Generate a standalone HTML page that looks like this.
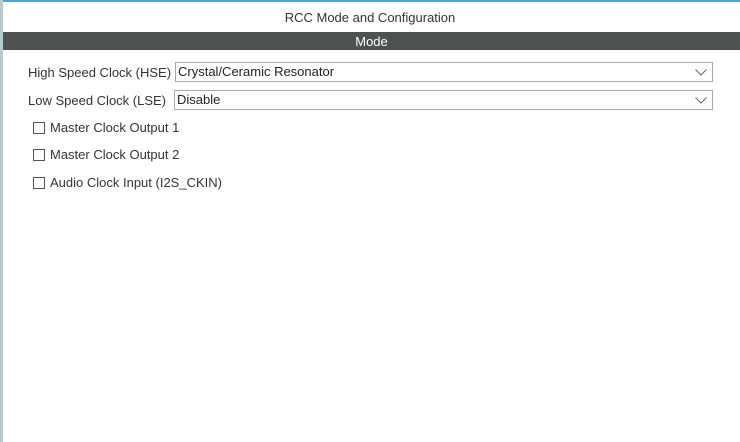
<!DOCTYPE html>
<html><head><style>
body{margin:0;width:740px;height:442px;background:#fff;position:relative;overflow:hidden;font-family:"Liberation Sans",sans-serif;font-size:13px;color:#333}
.abs{position:absolute}
.sel{position:absolute;border:1px solid #a8a8a8;height:20px;box-sizing:border-box;background:#fff;line-height:18px;padding-left:2px;color:#222}
.sel svg{position:absolute;right:5px;top:6px}
.cb{position:absolute;width:10px;height:10px;border:1px solid #555;background:#fff}
</style></head><body>
<div class="abs" style="left:0;top:0;width:740px;height:2px;background:#3fa9dc"></div>
<div class="abs" style="left:0;top:0;width:3px;height:442px;background:#b9cacb"></div>
<div class="abs" style="left:0;top:10px;width:740px;text-align:center;color:#333">RCC Mode and Configuration</div>
<div class="abs" style="left:3px;top:32px;width:737px;height:18px;background:#505251;color:#fff;text-align:center;line-height:19px">Mode</div>
<div class="abs" style="left:28px;top:65px">High Speed Clock (HSE)</div>
<div class="sel" style="left:175px;top:62px;width:538px">Crystal/Ceramic Resonator<svg width="12" height="7"><path d="M0.5 0.5L6 6L11.5 0.5" fill="none" stroke="#666"/></svg></div>
<div class="abs" style="left:28px;top:93px">Low Speed Clock (LSE)</div>
<div class="sel" style="left:174px;top:90px;width:539px">Disable<svg width="12" height="7"><path d="M0.5 0.5L6 6L11.5 0.5" fill="none" stroke="#666"/></svg></div>
<div class="cb" style="left:33px;top:122px"></div><div class="abs" style="left:50px;top:120px">Master Clock Output 1</div>
<div class="cb" style="left:33px;top:149px"></div><div class="abs" style="left:50px;top:147px">Master Clock Output 2</div>
<div class="cb" style="left:33px;top:177px"></div><div class="abs" style="left:50px;top:175px">Audio Clock Input (I2S_CKIN)</div>
</body></html>
